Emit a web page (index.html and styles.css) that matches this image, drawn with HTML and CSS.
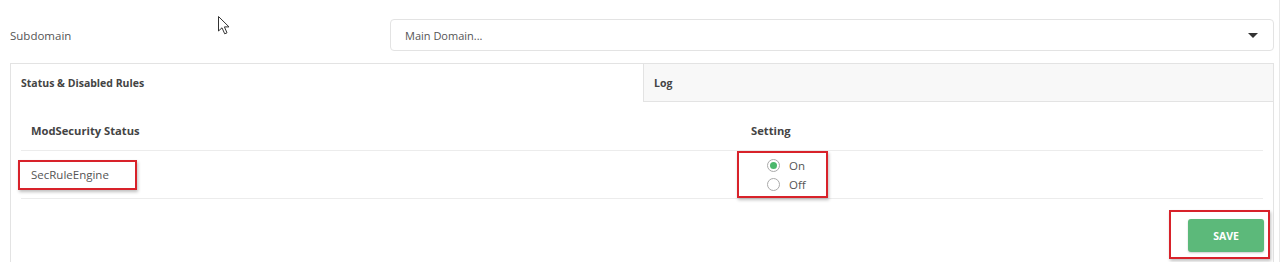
FILE: index.html
```html
<!DOCTYPE html>
<html lang="en">
<head>
  <meta charset="UTF-8" />
  <title>ModSecurity</title>
  <link rel="stylesheet" href="styles.css">
</head>
<body>
  <div class="page">

    <div class="form-row">
      <label class="form-label">Subdomain</label>
      <div class="select-box">
        <span>Main Domain...</span>
        <span class="caret"></span>
      </div>
    </div>

    <div class="panel">
      <div class="tabs">
        <div class="tab active">Status &amp; Disabled Rules</div>
        <div class="tab">Log</div>
      </div>

      <div class="panel-body">
        <div class="table">
          <div class="table-head">
            <div class="col-name">ModSecurity Status</div>
            <div class="col-setting">Setting</div>
          </div>
          <div class="table-row">
            <div class="col-name">
              <span class="marked rule-name">SecRuleEngine</span>
            </div>
            <div class="col-setting">
              <div class="marked radio-group">
                <label class="radio"><span class="dot checked"></span>On</label>
                <label class="radio"><span class="dot"></span>Off</label>
              </div>
            </div>
          </div>
        </div>

        <div class="actions">
          <div class="marked save-wrap">
            <button class="save-btn">SAVE</button>
          </div>
        </div>
      </div>
    </div>

    <svg class="cursor" width="17" height="21" viewBox="0 0 17 21">
      <path d="M1.5 1.5 L1.5 16 L5 12.8 L7.7 18.8 L10 17.8 L7.4 11.9 L12 11.9 Z" fill="#fff" stroke="#333" stroke-width="1" stroke-linejoin="round"/>
    </svg>

  </div>
</body>
</html>
```

FILE: styles.css
```css
* {
  margin: 0;
  padding: 0;
  box-sizing: border-box;
}

body {
  font-family: 'Open Sans', 'Noto Sans', sans-serif;
  font-size: 11.5px;
  color: #555;
  background: #fff;
}

.page {
  position: relative;
  width: 1280px;
  height: 262px;
  border-right: 1px solid #e8e8e8;
  padding: 19px 5px 0 10px;
  overflow: hidden;
}

.form-row {
  display: flex;
  align-items: center;
  height: 32px;
}

.form-label {
  width: 380px;
  color: #555;
}

.select-box {
  flex: 1;
  height: 32px;
  border: 1px solid #e3e3e3;
  border-radius: 4px;
  display: flex;
  align-items: center;
  justify-content: space-between;
  padding: 0 15px 0 14px;
  font-size: 11px;
  color: #555;
}

.caret {
  width: 0;
  height: 0;
  border-left: 5px solid transparent;
  border-right: 5px solid transparent;
  border-top: 5px solid #333;
  margin-top: 1px;
}

.panel {
  margin-top: 12px;
  border: 1px solid #e3e3e3;
  border-bottom: none;
  height: 200px;
}

.tabs {
  display: flex;
  height: 38px;
}

.tab {
  flex: 1;
  display: flex;
  align-items: center;
  padding: 0 10px;
  font-weight: bold;
  font-size: 10.5px;
  color: #444;
  background: #f8f8f8;
  border-left: 1px solid #e3e3e3;
  border-bottom: 1px solid #e3e3e3;
}

.tab.active {
  flex: 0 0 632px;
  background: #fff;
  border-left: none;
  border-bottom: none;
}

.panel-body {
  padding: 0 10px 0 10px;
}

.table-head,
.table-row {
  display: flex;
  align-items: center;
}

.table-head {
  height: 49px;
  padding-top: 9px;
  border-bottom: 1px solid #ececec;
  font-weight: bold;
  font-size: 11.2px;
  color: #444;
}

.table-row {
  height: 48px;
  border-bottom: 1px solid #ececec;
}

.col-name {
  width: 720px;
  padding-left: 10px;
}

.col-setting {
  flex: 1;
  padding-left: 10px;
}

.marked {
  border: 2px solid #d8222a;
  box-shadow: 1px 2px 3px rgba(0, 0, 0, 0.25);
}

.rule-name {
  display: inline-block;
  margin-left: -13px;
  padding: 4px 26px 4px 11px;
  line-height: 18px;
}

.radio-group {
  display: inline-flex;
  flex-direction: column;
  margin-left: -14px;
  padding: 3px 20px 2px 28px;
}

.radio {
  display: flex;
  align-items: center;
  height: 19px;
  gap: 9px;
}

.dot {
  width: 13px;
  height: 13px;
  border-radius: 50%;
  border: 1px solid #aaa;
  background: #fff;
  position: relative;
}

.dot.checked::after {
  content: "";
  position: absolute;
  top: 2px;
  left: 2px;
  width: 7px;
  height: 7px;
  border-radius: 50%;
  background: #4cb86c;
}

.actions {
  display: flex;
  justify-content: flex-end;
  margin-top: 11px;
  margin-right: -7px;
}

.save-wrap {
  padding: 7px 4px 5px 17px;
}

.save-btn {
  width: 76px;
  height: 33px;
  border: none;
  border-radius: 3px;
  background: #5cb97a;
  color: #fff;
  font-family: 'Open Sans', 'Noto Sans', sans-serif;
  font-weight: bold;
  font-size: 10.5px;
  box-shadow: 0 1px 2px rgba(0, 0, 0, 0.2);
}

.cursor {
  position: absolute;
  left: 217px;
  top: 15px;
}
```
